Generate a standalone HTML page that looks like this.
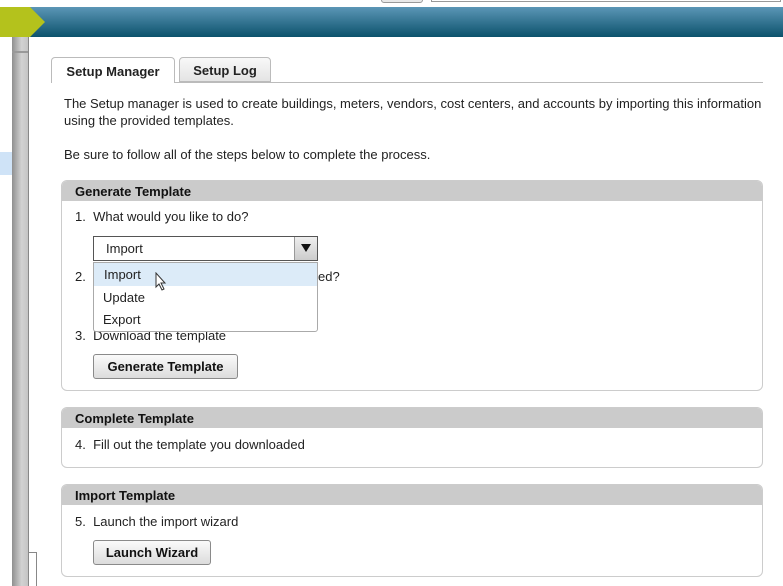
<!DOCTYPE html>
<html><head><style>
*{margin:0;padding:0;box-sizing:border-box}
body{width:783px;height:586px;overflow:hidden;background:#fff;font-family:"Liberation Sans",sans-serif;font-size:13px;color:#222;position:relative}
.a{position:absolute}
.hdr{left:0;top:7px;width:783px;height:30px;background:linear-gradient(#5b96b6,#0c526c)}
.panel{position:absolute;left:61px;width:702px;border:1px solid #ccc;border-radius:6px;background:#fff}
.ph{height:20px;background:#cbcbcb;border-radius:5px 5px 0 0;font-weight:bold;padding:3px 13px;font-size:13px;color:#111}
.btn{position:absolute;border:1px solid #8a8a8a;border-radius:3px;background:linear-gradient(#fafafa,#dcdcdc);font-weight:bold;font-size:13px;text-align:center;line-height:23px;color:#111}
</style></head><body>
<div class="a" style="left:381px;top:-3px;width:42px;height:6px;border:1px solid #999;border-radius:3px;background:#e8e8e8"></div>
<div class="a" style="left:431px;top:-3px;width:350px;height:5px;border:1px solid #999"></div>
<div class="a hdr"></div>
<svg class="a" style="left:0;top:7px" width="46" height="30"><polygon points="0,0 30,0 45,15 30,30 0,30" fill="#b4c21c"/></svg>
<div class="a" style="left:0;top:152px;width:12px;height:23px;background:#cfe3f7"></div>
<div class="a" style="left:12px;top:37px;width:16px;height:549px;background:linear-gradient(90deg,#8f8f8f,#d2d2d2 60%,#c4c4c4)"></div>
<div class="a" style="left:12px;top:51px;width:16px;height:2px;background:#999"></div>
<div class="a" style="left:28px;top:37px;width:2px;height:515px;border-left:1px solid #888"></div>
<div class="a" style="left:28px;top:552px;width:9px;height:34px;border-left:1px solid #888;border-top:1px solid #888;border-right:1px solid #888"></div>

<div class="a" style="left:51px;top:57px;width:124px;height:26px;border:1px solid #bbb;border-bottom:none;border-radius:4px 4px 0 0;background:#fff;font-weight:bold;padding-top:6px;text-align:center;z-index:2">Setup Manager</div>
<div class="a" style="left:179px;top:57px;width:92px;height:25px;border:1px solid #bbb;border-radius:4px 4px 0 0;background:linear-gradient(#f8f8f8,#e4e4e4);font-weight:bold;padding-top:5px;text-align:center">Setup Log</div>
<div class="a" style="left:51px;top:82px;width:712px;height:1px;background:#bbb"></div>

<div class="a" style="left:64px;top:95px;width:700px;line-height:17px">The Setup manager is used to create buildings, meters, vendors, cost centers, and accounts by importing this information using the provided templates.</div>
<div class="a" style="left:64px;top:147px">Be sure to follow all of the steps below to complete the process.</div>

<div class="panel" style="top:180px;height:211px"><div class="ph">Generate Template</div></div>
<div class="a" style="left:75px;top:209px">1.&nbsp; What would you like to do?</div>
<div class="a" style="left:93px;top:236px;width:225px;height:25px;border:1px solid #555;background:#fff;padding:4px 12px">Import</div>
<div class="a" style="left:294px;top:237px;width:23px;height:23px;background:linear-gradient(#eee,#ccc);border-left:1px solid #999"></div>
<svg class="a" style="left:300px;top:243px" width="12" height="10"><polygon points="1,1 11,1 6,9" fill="#111"/></svg>
<div class="a" style="left:75px;top:269px">2.</div>
<div class="a" style="left:318px;top:269px">ed?</div>
<div class="a" style="left:75px;top:328px">3.&nbsp; Download the template</div>
<div class="a" style="left:93px;top:262px;width:225px;height:70px;border:1px solid #aaa;border-radius:0 0 3px 3px;background:#fff">
 <div style="height:23px;background:#dcebf8;padding:4px 10px">Import</div>
 <div style="padding:4px 9px 0">Update</div>
 <div style="padding:7px 9px 0">Export</div>
</div>
<svg class="a" style="left:155px;top:272px" width="12" height="20"><path d="M1,1 L1,15 L4,12 L7,18 L9,17 L6,11 L10,11 Z" fill="#fff" stroke="#333" stroke-width="1"/></svg>
<div class="btn" style="left:93px;top:354px;width:145px;height:25px">Generate Template</div>

<div class="panel" style="top:407px;height:61px"><div class="ph">Complete Template</div></div>
<div class="a" style="left:75px;top:437px">4.&nbsp; Fill out the template you downloaded</div>

<div class="panel" style="top:484px;height:93px"><div class="ph">Import Template</div></div>
<div class="a" style="left:75px;top:514px">5.&nbsp; Launch the import wizard</div>
<div class="btn" style="left:93px;top:540px;width:118px;height:25px">Launch Wizard</div>
</body></html>
